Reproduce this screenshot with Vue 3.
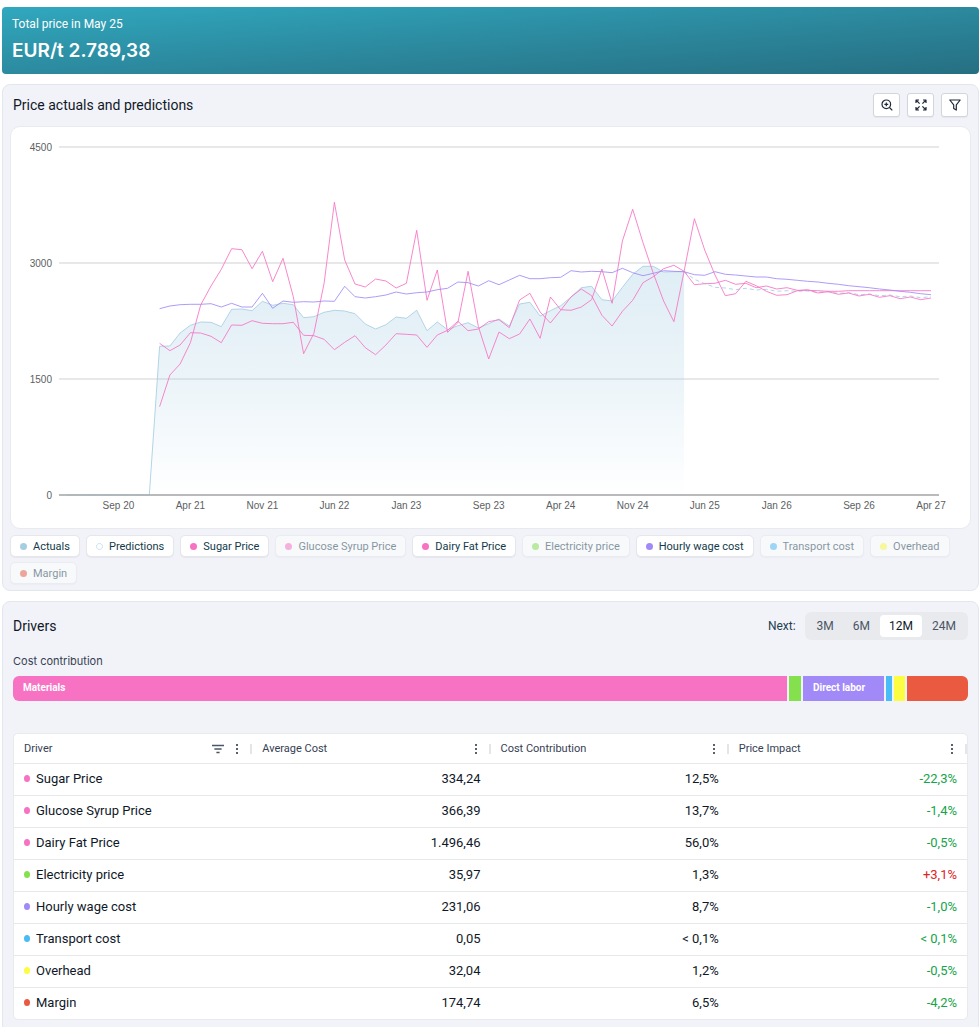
<template>
  <main class="page">
    <!-- Total price -->
    <section class="banner">
      <p class="banner-label">Total price in May 25</p>
      <p class="banner-value">EUR/t 2.789,38</p>
    </section>

    <!-- Chart -->
    <section class="panel">
      <header class="panel-header">
        <h2 class="panel-title">Price actuals and predictions</h2>
        <div class="tools">
          <button type="button" class="tool" aria-label="Zoom in">
            <svg viewBox="0 0 12 12" width="12" height="12">
              <circle cx="5.3" cy="5.3" r="4.3" />
              <path d="M8.5 8.5 11.3 11.3M5.3 3.4v3.8M3.4 5.3h3.8" />
            </svg>
          </button>
          <button type="button" class="tool" aria-label="Full screen">
            <svg viewBox="0 0 12 12" width="12" height="12">
              <path d="M1 4V1h3M1 1l3.6 3.6M8 1h3v3M11 1 7.4 4.6M1 8v3h3M1 11l3.6-3.6M8 11h3V8M11 11 7.4 7.4" />
            </svg>
          </button>
          <button type="button" class="tool" aria-label="Filter">
            <svg viewBox="0 0 12 12" width="12" height="12">
              <path d="M.8 1h10.4L7.3 5.9v5.2L4.7 9.4V5.9z" />
            </svg>
          </button>
        </div>
      </header>

      <div class="chart-card">
        <svg class="chart" viewBox="0 0 959 401" role="img" aria-label="Price actuals and predictions">
          <defs>
            <linearGradient id="area" x1="0" y1="0" x2="0" y2="1">
              <stop offset="0" stop-color="#a6cee3" stop-opacity="0.36" />
              <stop offset="0.5" stop-color="#a6cee3" stop-opacity="0.22" />
              <stop offset="1" stop-color="#a6cee3" stop-opacity="0" />
            </linearGradient>
          </defs>
          <g v-for="tick in yTicks" :key="tick.label">
            <line class="grid" x1="48" x2="928" :y1="tick.y" :y2="tick.y" />
            <text class="axis" x="41" :y="tick.y + 4" text-anchor="end">{{ tick.label }}</text>
          </g>
          <polygon v-if="isOn('Actuals')" :points="areaPoints" fill="url(#area)" />
          <polyline
            v-for="line in visibleLines"
            :key="line.name"
            class="line"
            :class="{ dashed: line.dashed }"
            :points="toPoints(line.start, line.data)"
            :stroke="line.color"
          />
          <line class="baseline" x1="48" x2="928" y1="368" y2="368" />
          <text v-for="m in months" :key="m.label" class="axis" :x="xAt(m.index)" y="382" text-anchor="middle">{{ m.label }}</text>
        </svg>
      </div>

      <div class="legend">
        <button
          v-for="item in legend"
          :key="item.name"
          type="button"
          class="chip"
          :class="{ off: !item.on }"
          :aria-pressed="item.on"
          @click="item.on = !item.on"
        >
          <svg class="dot" viewBox="0 0 8 8" width="7" height="7">
            <circle v-if="item.hollow" cx="4" cy="4" r="3.4" fill="none" stroke="#a6cee3" stroke-dasharray="1.6 1" />
            <circle v-else cx="4" cy="4" r="4" :fill="item.color" />
          </svg>
          {{ item.name }}
        </button>
      </div>
    </section>

    <!-- Drivers -->
    <section class="panel drivers">
      <header class="panel-header">
        <h2 class="panel-title">Drivers</h2>
        <div class="range">
          <span class="range-label">Next:</span>
          <div class="toggle">
            <button
              v-for="r in ranges"
              :key="r"
              type="button"
              :class="{ active: r === range }"
              :aria-pressed="r === range"
              @click="range = r"
            >{{ r }}</button>
          </div>
        </div>
      </header>

      <h3 class="sub-title">Cost contribution</h3>
      <div class="stack">
        <div v-for="s in stack" :key="s.color" class="segment" :style="{ flexGrow: s.size, background: s.color }">{{ s.label }}</div>
      </div>

      <div class="table-card">
        <table>
          <thead>
            <tr>
              <th v-for="(col, i) in columns" :key="col" scope="col">
                <div class="th-inner">
                  <span>{{ col }}</span>
                  <span class="th-tools">
                    <button v-if="i === 0" type="button" class="th-btn" aria-label="Filter column">
                      <svg viewBox="0 0 12 10" width="12" height="10">
                        <path d="M0 1.5h12M2.4 5h7.2M4.4 8.5h3.2" stroke="#4a5565" stroke-width="1.3" />
                      </svg>
                    </button>
                    <button type="button" class="th-btn" aria-label="Column menu">
                      <svg viewBox="0 0 4 12" width="4" height="12">
                        <g fill="#2f3b4b">
                          <circle cx="2" cy="2" r="1.1" />
                          <circle cx="2" cy="6" r="1.1" />
                          <circle cx="2" cy="10" r="1.1" />
                        </g>
                      </svg>
                    </button>
                  </span>
                </div>
              </th>
            </tr>
          </thead>
          <tbody>
            <tr v-for="row in rows" :key="row.name">
              <td>
                <span class="name">
                  <i class="bullet" :style="{ background: row.color }"></i>{{ row.name }}
                </span>
              </td>
              <td class="num">{{ row.cost }}</td>
              <td class="num">{{ row.share }}</td>
              <td class="num" :class="row.impact.startsWith('+') ? 'up' : 'down'">{{ row.impact }}</td>
            </tr>
          </tbody>
        </table>
      </div>
    </section>
  </main>
</template>

<script setup>
import { ref, computed } from 'vue'

const PINK = '#f772c3'
const GREEN = '#84e14d'
const PURPLE = '#a18af7'
const BLUE = '#49bbf7'
const YELLOW = '#fcfc40'
const RED = '#ea5a41'

const legend = ref([
  { name: 'Actuals', color: '#a6cee3', on: true },
  { name: 'Predictions', color: '#a6cee3', on: true, hollow: true },
  { name: 'Sugar Price', color: PINK, on: true },
  { name: 'Glucose Syrup Price', color: PINK, on: false },
  { name: 'Dairy Fat Price', color: PINK, on: true },
  { name: 'Electricity price', color: GREEN, on: false },
  { name: 'Hourly wage cost', color: PURPLE, on: true },
  { name: 'Transport cost', color: BLUE, on: false },
  { name: 'Overhead', color: YELLOW, on: false },
  { name: 'Margin', color: RED, on: false },
])

// samples are depths below the top of the plot, three steps per unit
const actuals = [
  945, 945, 945, 945, 945, 945, 945, 945, 945, 499, 498, 459, 436, 426, 427, 440, 388, 387, 392, 364, 376,
  370, 374, 413, 410, 397, 391, 393, 401, 432, 447, 434, 411, 415, 391, 452, 426, 449, 437, 428, 444,
  431, 417, 438, 372, 367, 408, 392, 377, 351, 323, 319, 359, 363, 322, 283, 259, 259, 276, 275, 275,
]

const lines = [
  { name: 'Actuals', color: '#a6cee3', start: 0, data: actuals },
  {
    name: 'Predictions', color: '#a6cee3', start: 60, dashed: true,
    data: [275, 298, 311, 322, 324, 329, 325, 330, 328, 334, 332, 334, 333, 337, 335, 340, 338, 344, 342, 347, 345, 350, 348, 353, 350],
  },
  {
    name: 'Sugar Price', color: PINK, start: 9,
    data: [
      490, 512, 495, 458, 459, 469, 488, 435, 436, 422, 430, 431, 431, 427, 466, 467, 478, 509, 487, 467,
      503, 524, 495, 461, 463, 465, 502, 465, 451, 424, 452, 447, 425, 419, 443, 360, 340, 396, 429, 391,
      351, 327, 347, 406, 438, 394, 361, 308, 290, 266, 256, 274, 314, 311, 310, 301, 313, 310, 323, 318,
      327, 323, 331, 331, 332, 334, 334, 332, 332, 332, 332, 332, 332, 332, 332, 332,
    ],
  },
  {
    name: 'Dairy Fat Price', color: PINK, start: 9,
    data: [
      680, 585, 552, 488, 375, 318, 268, 206, 209, 266, 214, 305, 235, 350, 521, 460, 310, 67, 240, 312,
      321, 297, 303, 324, 310, 151, 361, 270, 457, 428, 274, 440, 537, 456, 476, 462, 417, 475, 351, 389,
      391, 381, 359, 267, 370, 183, 88, 188, 280, 363, 425, 274, 116, 210, 285, 347, 341, 304, 317, 334,
      346, 344, 332, 329, 339, 335, 343, 339, 348, 343, 352, 347, 356, 351, 359, 354,
    ],
  },
  {
    name: 'Hourly wage cost', color: PURPLE, start: 9,
    data: [
      386, 378, 374, 373, 373, 371, 381, 370, 381, 381, 340, 385, 363, 367, 365, 366, 363, 364, 319, 350,
      354, 350, 345, 336, 342, 338, 336, 329, 325, 306, 308, 318, 302, 314, 300, 286, 296, 296, 293, 292,
      272, 276, 274, 275, 278, 265, 278, 287, 280, 272, 274, 275, 284, 286, 275, 283, 285, 288, 291, 291,
      296, 298, 301, 304, 306, 310, 313, 317, 320, 323, 327, 330, 334, 337, 341, 344,
    ],
  },
]

const yTicks = [
  { label: '4500', y: 20 },
  { label: '3000', y: 136 },
  { label: '1500', y: 252 },
  { label: '0', y: 368 },
]

const months = [
  { label: 'Sep 20', index: 5 },
  { label: 'Apr 21', index: 12 },
  { label: 'Nov 21', index: 19 },
  { label: 'Jun 22', index: 26 },
  { label: 'Jan 23', index: 33 },
  { label: 'Sep 23', index: 41 },
  { label: 'Apr 24', index: 48 },
  { label: 'Nov 24', index: 55 },
  { label: 'Jun 25', index: 62 },
  { label: 'Jan 26', index: 69 },
  { label: 'Sep 26', index: 77 },
  { label: 'Apr 27', index: 84 },
]

const xAt = (i) => 56 + (i * 864) / 84
const yAt = (v) => 53 + v / 3
const toPoints = (start, data) =>
  data.map((v, i) => `${xAt(start + i).toFixed(1)},${yAt(v).toFixed(1)}`).join(' ')

const areaPoints = `${toPoints(0, actuals)} ${xAt(60).toFixed(1)},368`
const isOn = (name) => legend.value.find((item) => item.name === name).on
const visibleLines = computed(() => lines.filter((line) => isOn(line.name)))

const ranges = ['3M', '6M', '12M', '24M']
const range = ref('12M')

const stack = [
  { label: 'Materials', size: 774, color: PINK },
  { label: '', size: 12, color: GREEN },
  { label: 'Direct labor', size: 81, color: PURPLE },
  { label: '', size: 6, color: BLUE },
  { label: '', size: 11, color: YELLOW },
  { label: '', size: 61, color: RED },
]

const columns = ['Driver', 'Average Cost', 'Cost Contribution', 'Price Impact']
const rows = [
  { name: 'Sugar Price', color: PINK, cost: '334,24', share: '12,5%', impact: '-22,3%' },
  { name: 'Glucose Syrup Price', color: PINK, cost: '366,39', share: '13,7%', impact: '-1,4%' },
  { name: 'Dairy Fat Price', color: PINK, cost: '1.496,46', share: '56,0%', impact: '-0,5%' },
  { name: 'Electricity price', color: GREEN, cost: '35,97', share: '1,3%', impact: '+3,1%' },
  { name: 'Hourly wage cost', color: PURPLE, cost: '231,06', share: '8,7%', impact: '-1,0%' },
  { name: 'Transport cost', color: BLUE, cost: '0,05', share: '< 0,1%', impact: '< 0,1%' },
  { name: 'Overhead', color: YELLOW, cost: '32,04', share: '1,2%', impact: '-0,5%' },
  { name: 'Margin', color: RED, cost: '174,74', share: '6,5%', impact: '-4,2%' },
]
</script>

<style>
body {
  margin: 0;
  background: #fff;
}
</style>

<style scoped>
.page {
  display: flex;
  flex-direction: column;
  gap: 10px;
  padding: 7px 1px 0 2px;
  font-family: Roboto, 'Liberation Sans', sans-serif;
  color: #101828;
}
button {
  font-family: inherit;
  cursor: pointer;
}
p, h2, h3 {
  margin: 0;
}

/* Banner */
.banner {
  padding: 8px 10px 10px;
  border-radius: 4px;
  background: linear-gradient(176deg, #30a8be, #2b8499 60%, #266f82);
  color: #fff;
}
.banner-label {
  font-size: 12px;
  line-height: 18px;
}
.banner-value {
  margin-top: 5px;
  font-family: Inter, sans-serif;
  font-size: 19px;
  line-height: 26px;
  font-weight: 600;
}

/* Panels */
.panel {
  padding: 8px 7px 6px;
  border: 1px solid #e2e6ee;
  border-radius: 8px;
  background: #f2f3f8;
}
.panel-header {
  display: flex;
  align-items: center;
  justify-content: space-between;
  padding: 0 3px;
}
.panel-title {
  font-size: 14px;
  line-height: 24px;
  font-weight: 400;
}
.tools {
  display: flex;
  gap: 7px;
}
.tool {
  display: flex;
  align-items: center;
  justify-content: center;
  width: 27px;
  height: 24px;
  padding: 0;
  border: 1px solid #d1d5dc;
  border-radius: 3px;
  background: #fff;
  box-shadow: 0 1px 1px rgba(0, 0, 0, 0.05);
}
.tool svg {
  fill: none;
  stroke: #1e2939;
  stroke-width: 1.2;
  stroke-linejoin: round;
}

/* Chart */
.chart-card {
  margin-top: 9px;
  border: 1px solid #e8eaf0;
  border-radius: 10px;
  background: #fff;
}
.chart {
  display: block;
  width: 100%;
}
.grid {
  stroke: #e0e1e3;
  stroke-width: 1.4;
}
.baseline {
  stroke: #a9abad;
  stroke-width: 1.6;
}
.axis {
  font-family: 'Liberation Sans', sans-serif;
  font-size: 10px;
  fill: #5c5f63;
}
.line {
  fill: none;
  stroke-width: 1;
  stroke-opacity: 0.85;
}
.dashed {
  stroke-dasharray: 4 3;
}

/* Legend */
.legend {
  display: flex;
  flex-wrap: wrap;
  gap: 5px 6px;
  margin-top: 6px;
}
.chip {
  display: flex;
  align-items: center;
  gap: 6px;
  height: 22px;
  padding: 0 9px;
  border: 1px solid #e5e7eb;
  border-radius: 5px;
  background: #fff;
  box-shadow: 0 1px 1px rgba(0, 0, 0, 0.05);
  color: #123a4b;
  font-size: 11px;
}
.chip.off {
  opacity: 0.5;
}

/* Drivers */
.range {
  display: flex;
  align-items: center;
  gap: 9px;
}
.range-label {
  font-size: 12px;
  color: #1c4152;
}
.toggle {
  display: flex;
  gap: 1px;
  padding: 3px;
  border-radius: 6px;
  background: #e9eaee;
}
.toggle button {
  height: 22px;
  padding: 0 9px;
  border: 0;
  border-radius: 4px;
  background: transparent;
  color: #4a5565;
  font-size: 12px;
}
.toggle .active {
  background: #fff;
  color: #101828;
}
.drivers {
  padding: 10px 10px 12px;
}
.drivers .panel-header {
  padding: 0;
}
.sub-title {
  margin-top: 12px;
  font-family: Inter, sans-serif;
  font-size: 11px;
  line-height: 18px;
  font-weight: 400;
  color: #364153;
}
.stack {
  display: flex;
  gap: 2px;
  height: 25px;
  margin-top: 6px;
  overflow: hidden;
  border-radius: 6px;
}
.segment {
  flex: 1 1 0;
  min-width: 0;
  text-indent: 10px;
  line-height: 24px;
  font-family: Roboto, sans-serif;
  font-size: 10px;
  font-weight: 700;
  color: #fff;
  white-space: nowrap;
}

/* Table */
.table-card {
  margin-top: 32px;
  overflow: hidden;
  border: 1px solid #e8eaed;
  border-radius: 5px;
  background: #fff;
}
table {
  width: 100%;
  table-layout: fixed;
  border-collapse: collapse;
}
th {
  height: 29px;
  padding: 0;
  font-size: 11px;
  font-weight: 400;
  color: #364153;
  text-align: left;
}
.th-inner {
  display: flex;
  justify-content: space-between;
  padding: 0 10px;
  line-height: 12px;
  background: linear-gradient(#e3e5e8, #e3e5e8) right center / 2px 10px no-repeat;
}
.th-tools {
  display: flex;
  align-items: center;
  gap: 11px;
}
.th-btn {
  display: flex;
  padding: 0;
  border: 0;
  background: none;
}
.th-inner .th-btn:last-child {
  margin-right: 3px;
}
td {
  height: 29px;
  padding: 0 10px 2px;
  border-top: 1px solid #e6e8ea;
  font-size: 13px;
  line-height: 18px;
}
.name {
  display: flex;
  align-items: center;
  gap: 6px;
}
.bullet {
  width: 6px;
  height: 7px;
  border-radius: 50%;
}
.num {
  text-align: right;
}
.down {
  color: #16a34a;
}
.up {
  color: #dc2626;
}
</style>
